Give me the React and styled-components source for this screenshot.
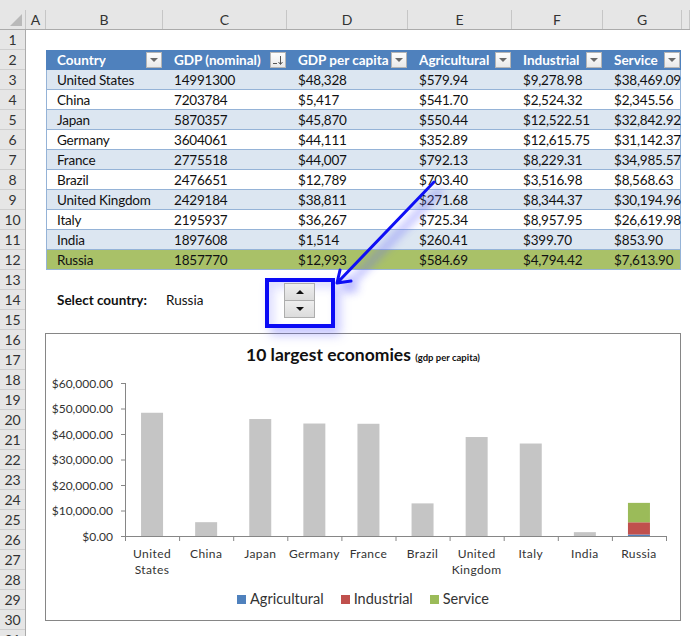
import styled, { createGlobalStyle } from 'styled-components'

const GlobalStyle = createGlobalStyle`
  body {
    margin: 0;
    font-family: Lato, "Noto Sans", sans-serif;
    background: #fff;
  }
`

const COLS = '20px 117px 124px 121px 104px 91px 79px 1fr'

const Page = styled.div`
  position: relative;
  width: 690px;
  height: 636px;
  overflow: hidden;
  background: #fff;
`

const ColumnHeaders = styled.div`
  display: grid;
  grid-template-columns: 26px ${COLS};
  height: 30px;
  padding-top: 10px;
  box-sizing: border-box;
  background: #e6e6e6;
  border-bottom: 1px solid #ababab;
`

const ColHead = styled.div`
  border-right: 1px solid #c6c6c6;
  text-align: center;
  font-size: 14px;
  line-height: 19px;
  color: #333;
`

const Corner = styled.div`
  position: relative;
  border-right: 1px solid #c6c6c6;
  &::after {
    content: '';
    position: absolute;
    right: 3px;
    bottom: 3px;
    border-style: solid;
    border-width: 0 0 12px 12px;
    border-color: transparent transparent #b9b9b9 transparent;
  }
`

const Body = styled.div`
  display: grid;
  grid-template-columns: 26px 1fr;
`

const RowHeads = styled.div`
  display: flex;
  flex-direction: column;
  background: #e6e6e6;
  border-right: 1px solid #ababab;
`

const RowHead = styled.div`
  height: 20px;
  box-sizing: border-box;
  border-bottom: 1px solid #cfcfcf;
  text-align: center;
  font-size: 14px;
  line-height: 19px;
  color: #333;
`

const Sheet = styled.div`
  display: grid;
  grid-template-columns: ${COLS};
  grid-template-rows: repeat(31, 20px);
`

const Table = styled.div`
  grid-column: 2 / 8;
  grid-row: 2 / 13;
  margin-right: 1px;
  display: flex;
  flex-direction: column;
`

const Row = styled.div`
  display: grid;
  grid-template-columns: 117px 124px 121px 104px 91px 1fr;
  height: 20px;
  background: ${({ $bg }) => $bg};
  box-shadow: ${({ $head }) =>
    $head ? 'none' : 'inset 1px 0 #95b3d7, inset -1px 0 #95b3d7, inset 0 -1px #95b3d7'};
`

const Cell = styled.div`
  padding-left: 11px;
  font-size: 13.5px;
  letter-spacing: -0.2px;
  line-height: 20px;
  color: #111;
  white-space: nowrap;
`

const HeadCell = styled.div`
  display: flex;
  align-items: center;
  justify-content: space-between;
  padding: 0 1px 0 11px;
  font-size: 13.5px;
  font-weight: 700;
  color: #fff;
  white-space: nowrap;
  overflow: hidden;
  span {
    overflow: hidden;
  }
`

const FilterButton = styled.div`
  flex: none;
  width: 16px;
  height: 16px;
  box-sizing: border-box;
  border: 1px solid #b5b5b5;
  background: linear-gradient(#fdfdfd, #e9e9e9);
  display: flex;
  align-items: center;
  justify-content: center;
  &::after {
    content: ${({ $sort }) => ($sort ? 'none' : "''")};
    border-style: solid;
    border-width: 4px 4px 0 4px;
    border-color: #6a6a6a transparent transparent transparent;
  }
`

const SelectLabel = styled.div`
  grid-column: 2;
  grid-row: 14;
  padding-left: 11px;
  font-size: 13.5px;
  font-weight: 700;
  line-height: 20px;
  color: #111;
`

const SelectValue = styled.div`
  grid-column: 3;
  grid-row: 14;
  padding-left: 3px;
  font-size: 13.5px;
  line-height: 20px;
  color: #111;
`

const Chart = styled.div`
  grid-column: 2 / 8;
  grid-row: 16 / 31;
  margin: 3px 1px 9px -1px;
  border: 1px solid #868686;
  background: #fff;
  display: flex;
  flex-direction: column;
`

const ChartTitle = styled.div`
  margin-top: 10px;
  height: 22px;
  text-align: center;
  font-size: 17.5px;
  font-weight: 700;
  line-height: 22px;
  color: #111;
  small {
    font-size: 9.5px;
    line-height: 1;
  }
`

const Legend = styled.div`
  height: 26px;
  display: flex;
  align-items: center;
  justify-content: center;
  gap: 17px;
`

const LegendItem = styled.div`
  display: flex;
  align-items: center;
  gap: 4px;
  font-size: 14.5px;
  line-height: 18px;
  color: #333;
  &::before {
    content: '';
    width: 9px;
    height: 9px;
    background: ${({ $color }) => $color};
  }
`

const Spinner = styled.div`
  position: absolute;
  left: 284px;
  top: 283px;
  width: 31px;
  height: 35px;
  display: flex;
  flex-direction: column;
`

const SpinHalf = styled.div`
  flex: 1;
  border: 1px solid #adadad;
  margin-top: ${({ $down }) => ($down ? '-1px' : '0')};
  background: linear-gradient(#eeeeee, #dcdcdc);
  display: flex;
  align-items: center;
  justify-content: center;
  &::after {
    content: '';
    border-style: solid;
    border-width: ${({ $down }) => ($down ? '4px 4px 0 4px' : '0 4px 4px 4px')};
    border-color: ${({ $down }) =>
      $down ? '#111 transparent transparent transparent' : 'transparent transparent #111 transparent'};
  }
`

const Highlight = styled.div`
  position: absolute;
  left: 265px;
  top: 278px;
  width: 70px;
  height: 50px;
  box-sizing: border-box;
  border: 4px solid #0a0af5;
  box-shadow: 5px 7px 10px rgba(90, 90, 255, 0.35), inset 5px 6px 10px rgba(90, 90, 255, 0.2);
`

const Overlay = styled.svg`
  position: absolute;
  left: 0;
  top: 0;
  pointer-events: none;
`

const rows = [
  ['United States', '14991300', '$48,328', '$579.94', '$9,278.98', '$38,469.09'],
  ['China', '7203784', '$5,417', '$541.70', '$2,524.32', '$2,345.56'],
  ['Japan', '5870357', '$45,870', '$550.44', '$12,522.51', '$32,842.92'],
  ['Germany', '3604061', '$44,111', '$352.89', '$12,615.75', '$31,142.37'],
  ['France', '2775518', '$44,007', '$792.13', '$8,229.31', '$34,985.57'],
  ['Brazil', '2476651', '$12,789', '$703.40', '$3,516.98', '$8,568.63'],
  ['United Kingdom', '2429184', '$38,811', '$271.68', '$8,344.37', '$30,194.96'],
  ['Italy', '2195937', '$36,267', '$725.34', '$8,957.95', '$26,619.98'],
  ['India', '1897608', '$1,514', '$260.41', '$399.70', '$853.90'],
  ['Russia', '1857770', '$12,993', '$584.69', '$4,794.42', '$7,613.90'],
]

const headers = ['Country', 'GDP (nominal)', 'GDP per capita', 'Agricultural', 'Industrial', 'Service']

const bars = [
  { name: ['United', 'States'], v: 48328 },
  { name: ['China'], v: 5417 },
  { name: ['Japan'], v: 45870 },
  { name: ['Germany'], v: 44111 },
  { name: ['France'], v: 44007 },
  { name: ['Brazil'], v: 12789 },
  { name: ['United', 'Kingdom'], v: 38811 },
  { name: ['Italy'], v: 36267 },
  { name: ['India'], v: 1514 },
  { name: ['Russia'], stack: [584.69, 4794.42, 7613.9] },
]

const stackColors = ['#4f81bd', '#c0504d', '#9bbb59']

function SortIcon() {
  return (
    <svg width="12" height="12" viewBox="0 0 12 12">
      <path d="M1 9.5h4" stroke="#555" strokeWidth="1" />
      <path d="M8.5 2v8M6.5 8l2 2.5 2-2.5" stroke="#555" strokeWidth="1" fill="none" />
    </svg>
  )
}

function Plot() {
  const x0 = 79
  const zero = 170
  const top = 17
  const scale = (zero - top) / 60000
  const step = 54.1
  const ticks = [0, 10000, 20000, 30000, 40000, 50000, 60000]
  return (
    <svg width="634" height="220" style={{ display: 'block' }}>
      {ticks.map((t) => {
        const y = zero - t * scale
        return (
          <g key={t}>
            <line x1="75" x2={x0} y1={y + 0.5} y2={y + 0.5} stroke="#868686" />
            <text x="67" y={y + 4.5} textAnchor="end" fontSize="12" fill="#333">
              ${t.toLocaleString('en-US')}.00
            </text>
          </g>
        )
      })}
      {bars.map((b, i) => {
        const cx = x0 + (i + 0.5) * step
        let acc = 0
        return (
          <g key={i}>
            {b.stack ? (
              b.stack.map((s, j) => {
                const h = s * scale
                const y = zero - acc - h
                acc += h
                return <rect key={j} x={cx - 11} y={y} width="22" height={h} fill={stackColors[j]} />
              })
            ) : (
              <rect x={cx - 11} y={zero - b.v * scale} width="22" height={b.v * scale} fill="#c5c5c5" />
            )}
            {b.name.map((n, k) => (
              <text key={n} x={cx} y={192 + k * 16} textAnchor="middle" fontSize="12" fill="#333" letterSpacing="0.4">
                {n}
              </text>
            ))}
          </g>
        )
      })}
      <line x1={x0 + 0.5} x2={x0 + 0.5} y1={top} y2={zero} stroke="#868686" />
      <line x1={x0} x2={620} y1={zero + 0.5} y2={zero + 0.5} stroke="#868686" />
      {Array.from({ length: 11 }, (_, i) => (
        <line key={i} x1={x0 + i * step + 0.5} x2={x0 + i * step + 0.5} y1={zero} y2={zero + 5} stroke="#868686" />
      ))}
    </svg>
  )
}

export default function App() {
  return (
    <Page>
      <GlobalStyle />
      <ColumnHeaders>
        <Corner />
        {['A', 'B', 'C', 'D', 'E', 'F', 'G', ''].map((c) => (
          <ColHead key={c}>{c}</ColHead>
        ))}
      </ColumnHeaders>
      <Body>
        <RowHeads>
          {Array.from({ length: 31 }, (_, i) => (
            <RowHead key={i}>{i + 1}</RowHead>
          ))}
        </RowHeads>
        <Sheet>
          <Table>
            <Row $head $bg="#4f81bd">
              {headers.map((h, i) => (
                <HeadCell key={h}>
                  <span>{h}</span>
                  <FilterButton $sort={i === 1}>{i === 1 && <SortIcon />}</FilterButton>
                </HeadCell>
              ))}
            </Row>
            {rows.map((r, i) => (
              <Row key={r[0]} $bg={i === 9 ? '#a9c168' : i % 2 === 0 ? '#dce6f1' : '#ffffff'}>
                {r.map((c, j) => (
                  <Cell key={j}>{c}</Cell>
                ))}
              </Row>
            ))}
          </Table>
          <SelectLabel>Select country:</SelectLabel>
          <SelectValue>Russia</SelectValue>
          <Chart>
            <ChartTitle>
              10 largest economies <small>(gdp per capita)</small>
            </ChartTitle>
            <Plot />
            <Legend>
              <LegendItem $color="#4f81bd">Agricultural</LegendItem>
              <LegendItem $color="#c0504d">Industrial</LegendItem>
              <LegendItem $color="#9bbb59">Service</LegendItem>
            </Legend>
          </Chart>
        </Sheet>
      </Body>
      <Highlight />
      <Spinner>
        <SpinHalf />
        <SpinHalf $down />
      </Spinner>
      <Overlay width="690" height="636">
        <defs>
          <filter id="glow" x="-20%" y="-20%" width="140%" height="140%">
            <feGaussianBlur stdDeviation="4" />
          </filter>
        </defs>
        <g filter="url(#glow)" opacity="0.45" transform="translate(7 7)">
          <path d="M434 182 L339 281 M337 283 L340 270 M337 283 L351 281" stroke="#6a6aff" strokeWidth="7" fill="none" />
        </g>
        <path
          d="M434 182 L339 281 M337 283 L340 270 M337 283 L351 281"
          stroke="#0f0ff5"
          strokeWidth="3"
          strokeLinecap="round"
          fill="none"
        />
      </Overlay>
    </Page>
  )
}
